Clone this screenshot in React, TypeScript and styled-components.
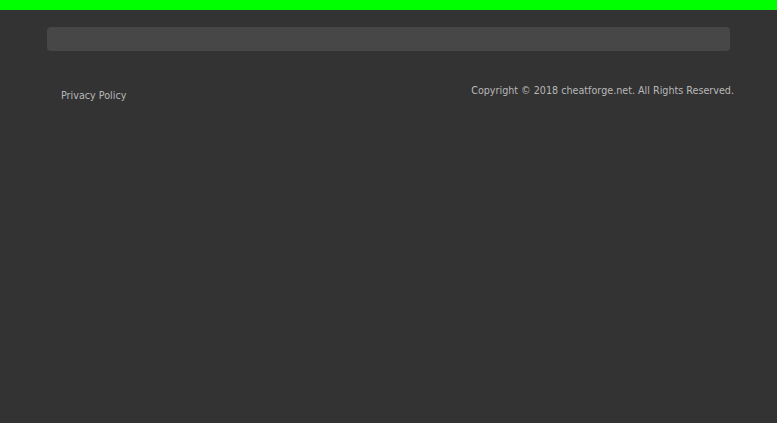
import React from "react";
import styled, { createGlobalStyle } from "styled-components";

const GlobalStyle = createGlobalStyle`
    html, body {
        margin: 0;
        padding: 0;
        background: #333333;
        font-family: "DejaVu Sans", Verdana, sans-serif;
    }
`;

const TopBar = styled.div`
    height: 10px;
    background: #00ff00;
`;

const Page = styled.div`
    min-height: 423px;
    background: #333333;
`;

const Wrapper = styled.div`
    width: 683px;
    margin: 0 auto;
    padding-top: 17px;
`;

const Panel = styled.div`
    height: 24px;
    border-radius: 4px;
    background: #474747;
`;

const Footer = styled.div`
    display: flex;
    justify-content: space-between;
    padding: 34px 0 0 14px;
    margin-right: -4px;
`;

const FooterLink = styled.a`
    margin-top: 5px;
    font-size: 9.6px;
    color: #b8b8b8;
    text-decoration: none;
`;

const Copyright = styled.p`
    margin: 0;
    font-size: 9.6px;
    color: #b8b8b8;
`;

export default function App() {
    return (
        <Page>
            <GlobalStyle />
            <TopBar />
            <Wrapper>
                <Panel />
                <Footer>
                    <FooterLink href="#">Privacy Policy</FooterLink>
                    <Copyright>Copyright © 2018 cheatforge.net. All Rights Reserved.</Copyright>
                </Footer>
            </Wrapper>
        </Page>
    );
}
